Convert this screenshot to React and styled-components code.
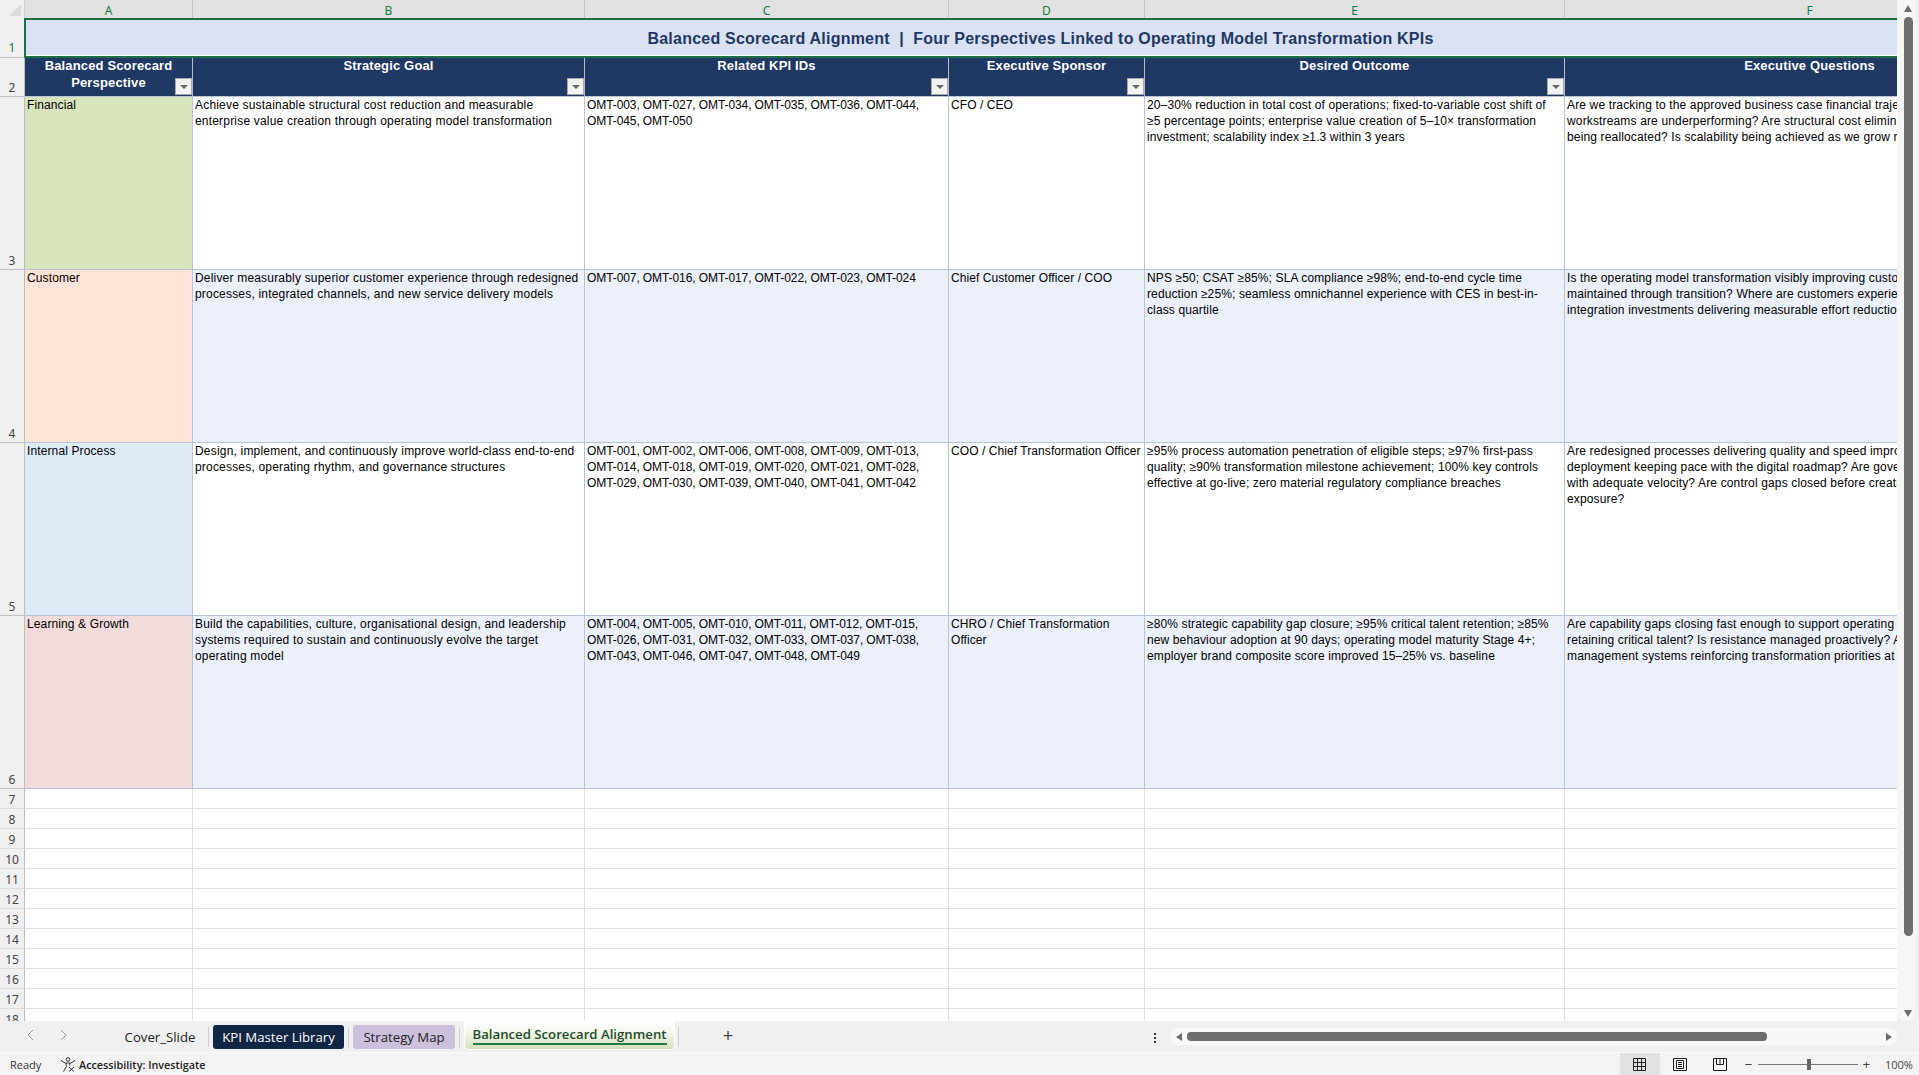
import styled, { createGlobalStyle } from "styled-components";
import { Fragment } from "react";

const GlobalStyle = createGlobalStyle`
  html, body { margin: 0; padding: 0; height: 100%; overflow: hidden; background: #f0f0f0; }
  #root { height: 100%; }
`;

const Page = styled.div`
  display: flex;
  flex-direction: column;
  width: 1919px;
  height: 1075px;
  overflow: hidden;
  font-family: "Liberation Sans", Arial, sans-serif;
`;

const SheetArea = styled.div`
  display: flex;
  height: 1021px;
  overflow: hidden;
`;

// column F runs on past the right edge of the window, as in the real sheet
const Grid = styled.div`
  display: grid;
  grid-template-columns: 25px 168px 392px 364px 196px 420px 490px;
  grid-template-rows: 18px 40px 39px repeat(4, 173px) repeat(12, 20px);
  width: 1897px;
  height: 1021px;
  overflow: hidden;
  background: #fff;
`;

const Corner = styled.div`
  display: flex;
  justify-content: flex-end;
  align-items: flex-end;
  padding: 0 3px 2px 0;
  box-sizing: border-box;
  background: #f0f0f0;
  border-right: 1px solid #d0d0d0;
`;

const CornerMark = styled.div`
  width: 12px;
  height: 12px;
  background: #dcdcdc;
  clip-path: polygon(100% 0, 100% 100%, 0 100%);
`;

const ColHead = styled.div`
  display: flex;
  align-items: center;
  justify-content: center;
  padding-top: 3px;
  box-sizing: border-box;
  background: #e1e1e1;
  border-right: 1px solid #c6c6c6;
  color: #107c41;
  font: 12px "Noto Sans", sans-serif;
  line-height: 15px;
`;

const RowHead = styled.div`
  display: flex;
  align-items: flex-end;
  justify-content: center;
  box-sizing: border-box;
  padding-bottom: ${(p) => (p.$selected ? 1 : 0)}px;
  background: #f0f0f0;
  border-right: 1px solid #bdbdbd;
  border-bottom: 1px solid ${(p) => (p.$light ? "#dcdcdc" : "#c0c0c0")};
  color: ${(p) => (p.$selected ? "#107c41" : "#444")};
  font: 12px "Noto Sans", sans-serif;
  line-height: 17px;
`;

const TitleCell = styled.div`
  grid-column: 2 / 8;
  display: flex;
  align-items: center;
  justify-content: center;
  box-sizing: border-box;
  margin-left: -1px;
  background: #d9e1f2;
  border-top: 2px solid #1e6f46;
  border-left: 2px solid #1e6f46;
  border-bottom: 2px solid #1e6f46;
  box-shadow: inset 0 -1px 0 #fff;
  padding-top: 1px;
  color: #1f3864;
  font-size: 16px;
  font-weight: 700;
  letter-spacing: 0.23px;
  white-space: pre;
  z-index: 1;
`;

const HeadCell = styled.div`
  position: relative;
  box-sizing: border-box;
  background: #1f3864;
  border-right: 1px solid #b5bcc8;
  border-bottom: 1px solid #b9c4d6;
  color: #fff;
  font-size: 13px;
  font-weight: 700;
  letter-spacing: 0.15px;
  line-height: 17px;
  text-align: center;
`;

const HeadLabel = styled.div`
  margin-top: -1px;
`;

const FilterButton = styled.div`
  position: absolute;
  right: 0;
  bottom: 1px;
  display: flex;
  align-items: center;
  justify-content: center;
  width: 17px;
  height: 17px;
  box-sizing: border-box;
  background: #f2f2f2;
  border: 1px solid #a3a8b1;
`;

const FilterArrow = styled.div`
  width: 0;
  height: 0;
  margin-top: 1px;
  border-left: 4.5px solid transparent;
  border-right: 4.5px solid transparent;
  border-top: 4.5px solid #666;
`;

const Cell = styled.div`
  box-sizing: border-box;
  overflow: hidden;
  padding-left: 2px;
  background: ${(p) => p.$fill};
  border-right: 1px solid #b7c4da;
  border-bottom: 1px solid #b7c4da;
  color: #000;
  font-size: 12px;
  letter-spacing: ${(p) => p.$spacing}px;
  line-height: 16px;
`;

const Line = styled.div`
  white-space: nowrap;
`;

const EmptyCell = styled.div`
  box-sizing: border-box;
  background: #fff;
  border-right: 1px solid #e1e1e1;
  border-bottom: 1px solid #e1e1e1;
`;

const VScroll = styled.div`
  width: 22px;
  background: #f0f0f0;
`;

const VTrack = styled.div`
  display: flex;
  flex-direction: column;
  align-items: flex-start;
  gap: 5px;
  width: 19px;
  height: 1021px;
  padding: 5px 0 4px 7px;
  box-sizing: border-box;
  border-radius: 0 0 9px 9px;
  background: #f6f6f6;
`;

const VThumb = styled.div`
  width: 9px;
  height: 919px;
  border-radius: 4.5px;
  background: #6e6e6e;
`;

const Spacer = styled.div`
  flex: 1;
`;

const Arrow = styled.div`
  width: 0;
  height: 0;
  ${(p) => p.$dir === "up" && "border-left: 4.5px solid transparent; border-right: 4.5px solid transparent; border-bottom: 7px solid #6e6e6e;"}
  ${(p) => p.$dir === "down" && "border-left: 4.5px solid transparent; border-right: 4.5px solid transparent; border-top: 7px solid #6e6e6e;"}
  ${(p) => p.$dir === "left" && "border-top: 4.5px solid transparent; border-bottom: 4.5px solid transparent; border-right: 6px solid #6e6e6e;"}
  ${(p) => p.$dir === "right" && "border-top: 4.5px solid transparent; border-bottom: 4.5px solid transparent; border-left: 6px solid #6e6e6e;"}
`;

const TabBar = styled.div`
  display: flex;
  align-items: flex-start;
  height: 32px;
  padding-right: 22px;
  box-sizing: border-box;
  background: #f0f0f0;
  border-bottom: 1px solid #fafafa;
`;

const TabNav = styled.div`
  display: flex;
  align-items: center;
  gap: 26px;
  width: 112px;
  height: 28px;
  padding-left: 27px;
  box-sizing: border-box;
`;

const Tab = styled.div`
  display: flex;
  align-items: center;
  justify-content: center;
  box-sizing: border-box;
  width: ${(p) => p.$w}px;
  height: 24px;
  margin-top: 4px;
  border-radius: 3px;
  background: ${(p) => p.$bg || "transparent"};
  color: ${(p) => p.$color || "#222"};
  font: 13.2px "Open Sans", sans-serif;
`;

const ActiveTab = styled.div`
  display: flex;
  flex-direction: column;
  align-items: center;
  box-sizing: border-box;
  width: 209px;
  height: 28px;
  padding-top: 4px;
  border-radius: 0 0 4px 4px;
  background: linear-gradient(180deg, #ffffff 0%, #f4f7ec 40%, #d5e0bd 100%);
  box-shadow: 0 0 0 1px #fff;
  color: #1d4d2f;
  font: 600 13.2px "Open Sans", sans-serif;
  line-height: 18px;
`;

const ActiveUnderline = styled.div`
  width: 194px;
  height: 2px;
  background: #1e7b45;
`;

const TabSep = styled.div`
  width: 1px;
  height: 20px;
  margin: 6px ${(p) => p.$right ?? 4}px 0 ${(p) => p.$left ?? 4}px;
  background: #cfcfcf;
`;

const AddTab = styled.div`
  width: 30px;
  margin: 4px 0 0 30px;
  color: #444;
  font: 18px "Liberation Sans", sans-serif;
  line-height: 22px;
  text-align: center;
`;

const DotMenu = styled.div`
  display: flex;
  flex-direction: column;
  gap: 2px;
  margin: 12px 15px 0 0;
`;

const Dot = styled.div`
  width: 2px;
  height: 2px;
  background: #333;
`;

const HScroll = styled.div`
  display: flex;
  align-items: center;
  gap: 5px;
  width: 726px;
  height: 17px;
  margin-top: 7px;
  padding: 0 5px;
  box-sizing: border-box;
  border-radius: 8px;
  background: #f8f8f8;
`;

const HThumb = styled.div`
  width: 580px;
  height: 9px;
  border-radius: 4px;
  background: #6e6e6e;
`;

const StatusBar = styled.div`
  display: flex;
  align-items: center;
  height: 22px;
  background: #f3f3f3;
  color: #333;
  font: 11px "Open Sans", sans-serif;
`;

const Ready = styled.div`
  width: 60px;
  padding-left: 10px;
  box-sizing: border-box;
`;

const A11y = styled.div`
  display: flex;
  align-items: center;
  gap: 3px;
  font-weight: 600;
  font-size: 10.8px;
  color: #222;
`;

const ViewButton = styled.div`
  display: flex;
  align-items: center;
  justify-content: center;
  width: 40px;
  height: 22px;
  background: ${(p) => (p.$active ? "#e1e1e1" : "transparent")};
`;

const ZoomSlider = styled.div`
  display: flex;
  align-items: center;
  width: 100px;
  height: 1px;
  margin: 0 4px 0 6px;
  background: #777;
`;

const ZoomKnob = styled.div`
  width: 4px;
  height: 11px;
  margin-left: 49px;
  background: #666;
`;

const ZoomSign = styled.div`
  margin-left: ${(p) => p.$ml || 0}px;
  color: #444;
  font: 13px "Liberation Sans", sans-serif;
`;

const ZoomValue = styled.div`
  width: 34px;
  margin-left: 15px;
  color: #444;
  font-size: 11px;
`;

const COLUMNS = ["A", "B", "C", "D", "E", "F"];

const SPACING = [0.19, -0.09, 0.07, 0.12, 0.15];

const HEADERS = [
  { lines: ["Balanced Scorecard", "Perspective"], filter: true },
  { lines: ["Strategic Goal"], filter: true },
  { lines: ["Related KPI IDs"], filter: true },
  { lines: ["Executive Sponsor"], filter: true },
  { lines: ["Desired Outcome"], filter: true },
  { lines: ["Executive Questions"], filter: false },
];

const ROWS = [
  {
    label: "Financial",
    color: "#d8e4bc",
    fill: "#ffffff",
    cells: [
      ["Achieve sustainable structural cost reduction and measurable", "enterprise value creation through operating model transformation"],
      ["OMT-003, OMT-027, OMT-034, OMT-035, OMT-036, OMT-044,", "OMT-045, OMT-050"],
      ["CFO / CEO"],
      ["20–30% reduction in total cost of operations; fixed-to-variable cost shift of", "≥5 percentage points; enterprise value creation of 5–10× transformation", "investment; scalability index ≥1.3 within 3 years"],
      ["Are we tracking to the approved business case financial trajectory? Which", "workstreams are underperforming? Are structural cost eliminations", "being reallocated? Is scalability being achieved as we grow revenue?"],
    ],
  },
  {
    label: "Customer",
    color: "#fde4d6",
    fill: "#ebf0fa",
    cells: [
      ["Deliver measurably superior customer experience through redesigned", "processes, integrated channels, and new service delivery models"],
      ["OMT-007, OMT-016, OMT-017, OMT-022, OMT-023, OMT-024"],
      ["Chief Customer Officer / COO"],
      ["NPS ≥50; CSAT ≥85%; SLA compliance ≥98%; end-to-end cycle time", "reduction ≥25%; seamless omnichannel experience with CES in best-in-", "class quartile"],
      ["Is the operating model transformation visibly improving customer", "maintained through transition? Where are customers experiencing", "integration investments delivering measurable effort reduction?"],
    ],
  },
  {
    label: "Internal Process",
    color: "#ddebf7",
    fill: "#ffffff",
    cells: [
      ["Design, implement, and continuously improve world-class end-to-end", "processes, operating rhythm, and governance structures"],
      ["OMT-001, OMT-002, OMT-006, OMT-008, OMT-009, OMT-013,", "OMT-014, OMT-018, OMT-019, OMT-020, OMT-021, OMT-028,", "OMT-029, OMT-030, OMT-039, OMT-040, OMT-041, OMT-042"],
      ["COO / Chief Transformation Officer"],
      ["≥95% process automation penetration of eligible steps; ≥97% first-pass", "quality; ≥90% transformation milestone achievement; 100% key controls", "effective at go-live; zero material regulatory compliance breaches"],
      ["Are redesigned processes delivering quality and speed improvements?", "deployment keeping pace with the digital roadmap? Are governance", "with adequate velocity? Are control gaps closed before creating", "exposure?"],
    ],
  },
  {
    label: "Learning & Growth",
    color: "#f2dcdb",
    fill: "#ebf0fa",
    cells: [
      ["Build the capabilities, culture, organisational design, and leadership", "systems required to sustain and continuously evolve the target", "operating model"],
      ["OMT-004, OMT-005, OMT-010, OMT-011, OMT-012, OMT-015,", "OMT-026, OMT-031, OMT-032, OMT-033, OMT-037, OMT-038,", "OMT-043, OMT-046, OMT-047, OMT-048, OMT-049"],
      ["CHRO / Chief Transformation", "Officer"],
      ["≥80% strategic capability gap closure; ≥95% critical talent retention; ≥85%", "new behaviour adoption at 90 days; operating model maturity Stage 4+;", "employer brand composite score improved 15–25% vs. baseline"],
      ["Are capability gaps closing fast enough to support operating model", "retaining critical talent? Is resistance managed proactively? Are", "management systems reinforcing transformation priorities at all levels?"],
    ],
  },
];

const EMPTY_ROWS = [7, 8, 9, 10, 11, 12, 13, 14, 15, 16, 17, 18];

function Lines({ lines }) {
  return lines.map((text) => <Line key={text}>{text}</Line>);
}

function Chevron({ flip }) {
  return (
    <svg width="7" height="12" viewBox="0 0 7 12" fill="none" stroke="#9a9a9a" strokeWidth="1">
      <path d={flip ? "M1 1l5 5-5 5" : "M6 1L1 6l5 5"} />
    </svg>
  );
}

function AccessibilityIcon() {
  return (
    <svg width="16" height="15" viewBox="0 0 16 15" fill="none" stroke="#333" strokeWidth="1">
      <circle cx="8" cy="2.4" r="1.8" />
      <path d="M1 3.5L5 6h6l4-2.5M6 6l.4 3.5L3.5 14.5M10 6l-.4 2.6" />
      <path d="M9 10l5 4.5M14 10l-5 4.5" />
    </svg>
  );
}

function NormalIcon() {
  return (
    <svg width="13" height="13" viewBox="0 0 13 13" fill="none" stroke="#222" strokeWidth="1">
      <path d="M.5.5h12v12H.5zM4.5.5v12M8.5.5v12M.5 4.5h12M.5 8.5h12" />
    </svg>
  );
}

function PageLayoutIcon() {
  return (
    <svg width="14" height="13" viewBox="0 0 14 13" fill="none" stroke="#222" strokeWidth="1">
      <path d="M.5.5h13v12H.5zM3.5 2.5h7v8h-7zM5 4.5h4M5 6.5h4M5 8.5h4" />
    </svg>
  );
}

function PageBreakIcon() {
  return (
    <svg width="14" height="13" viewBox="0 0 14 13" fill="none" stroke="#222" strokeWidth="1">
      <path d="M.5.5h13v12H.5zM3.5.5v6h7v-6M7 .5v6" />
    </svg>
  );
}

export default function App() {
  return (
    <Page>
      <GlobalStyle />
      <SheetArea>
        <Grid>
          <Corner>
            <CornerMark />
          </Corner>
          {COLUMNS.map((col) => (
            <ColHead key={col}>{col}</ColHead>
          ))}

          <RowHead $selected>1</RowHead>
          <TitleCell>{"Balanced Scorecard Alignment  |  Four Perspectives Linked to Operating Model Transformation KPIs"}</TitleCell>

          <RowHead>2</RowHead>
          {HEADERS.map((head) => (
            <HeadCell key={head.lines[0]}>
              <HeadLabel>
                <Lines lines={head.lines} />
              </HeadLabel>
              {head.filter && (
                <FilterButton>
                  <FilterArrow />
                </FilterButton>
              )}
            </HeadCell>
          ))}

          {ROWS.map((row, i) => (
            <Fragment key={row.label}>
              <RowHead>{i + 3}</RowHead>
              <Cell $fill={row.color} $spacing={0.12}>{row.label}</Cell>
              {row.cells.map((lines, c) => (
                <Cell key={lines[0]} $fill={row.fill} $spacing={SPACING[c]}>
                  <Lines lines={lines} />
                </Cell>
              ))}
            </Fragment>
          ))}

          {EMPTY_ROWS.map((n) => (
            <Fragment key={n}>
              <RowHead $light>{n}</RowHead>
              {COLUMNS.map((col) => (
                <EmptyCell key={col} />
              ))}
            </Fragment>
          ))}
        </Grid>
        <VScroll>
          <VTrack>
            <Arrow $dir="up" />
            <VThumb />
            <Spacer />
            <Arrow $dir="down" />
          </VTrack>
        </VScroll>
      </SheetArea>

      <TabBar>
        <TabNav>
          <Chevron />
          <Chevron flip />
        </TabNav>
        <Tab $w={96}>Cover_Slide</Tab>
        <TabSep $left={0} />
        <Tab $w={131} $bg="#0f2745" $color="#fff">KPI Master Library</Tab>
        <TabSep />
        <Tab $w={102} $bg="#ccc0dd">Strategy Map</Tab>
        <TabSep $right={5} />
        <ActiveTab>
          Balanced Scorecard Alignment
          <ActiveUnderline />
        </ActiveTab>
        <TabSep />
        <AddTab>+</AddTab>
        <Spacer />
        <DotMenu>
          <Dot />
          <Dot />
          <Dot />
        </DotMenu>
        <HScroll>
          <Arrow $dir="left" />
          <HThumb />
          <Spacer />
          <Arrow $dir="right" />
        </HScroll>
      </TabBar>

      <StatusBar>
        <Ready>Ready</Ready>
        <A11y>
          <AccessibilityIcon />
          Accessibility: Investigate
        </A11y>
        <Spacer />
        <ViewButton $active>
          <NormalIcon />
        </ViewButton>
        <ViewButton>
          <PageLayoutIcon />
        </ViewButton>
        <ViewButton>
          <PageBreakIcon />
        </ViewButton>
        <ZoomSign $ml={5}>−</ZoomSign>
        <ZoomSlider>
          <ZoomKnob />
        </ZoomSlider>
        <ZoomSign>+</ZoomSign>
        <ZoomValue>100%</ZoomValue>
      </StatusBar>
    </Page>
  );
}
